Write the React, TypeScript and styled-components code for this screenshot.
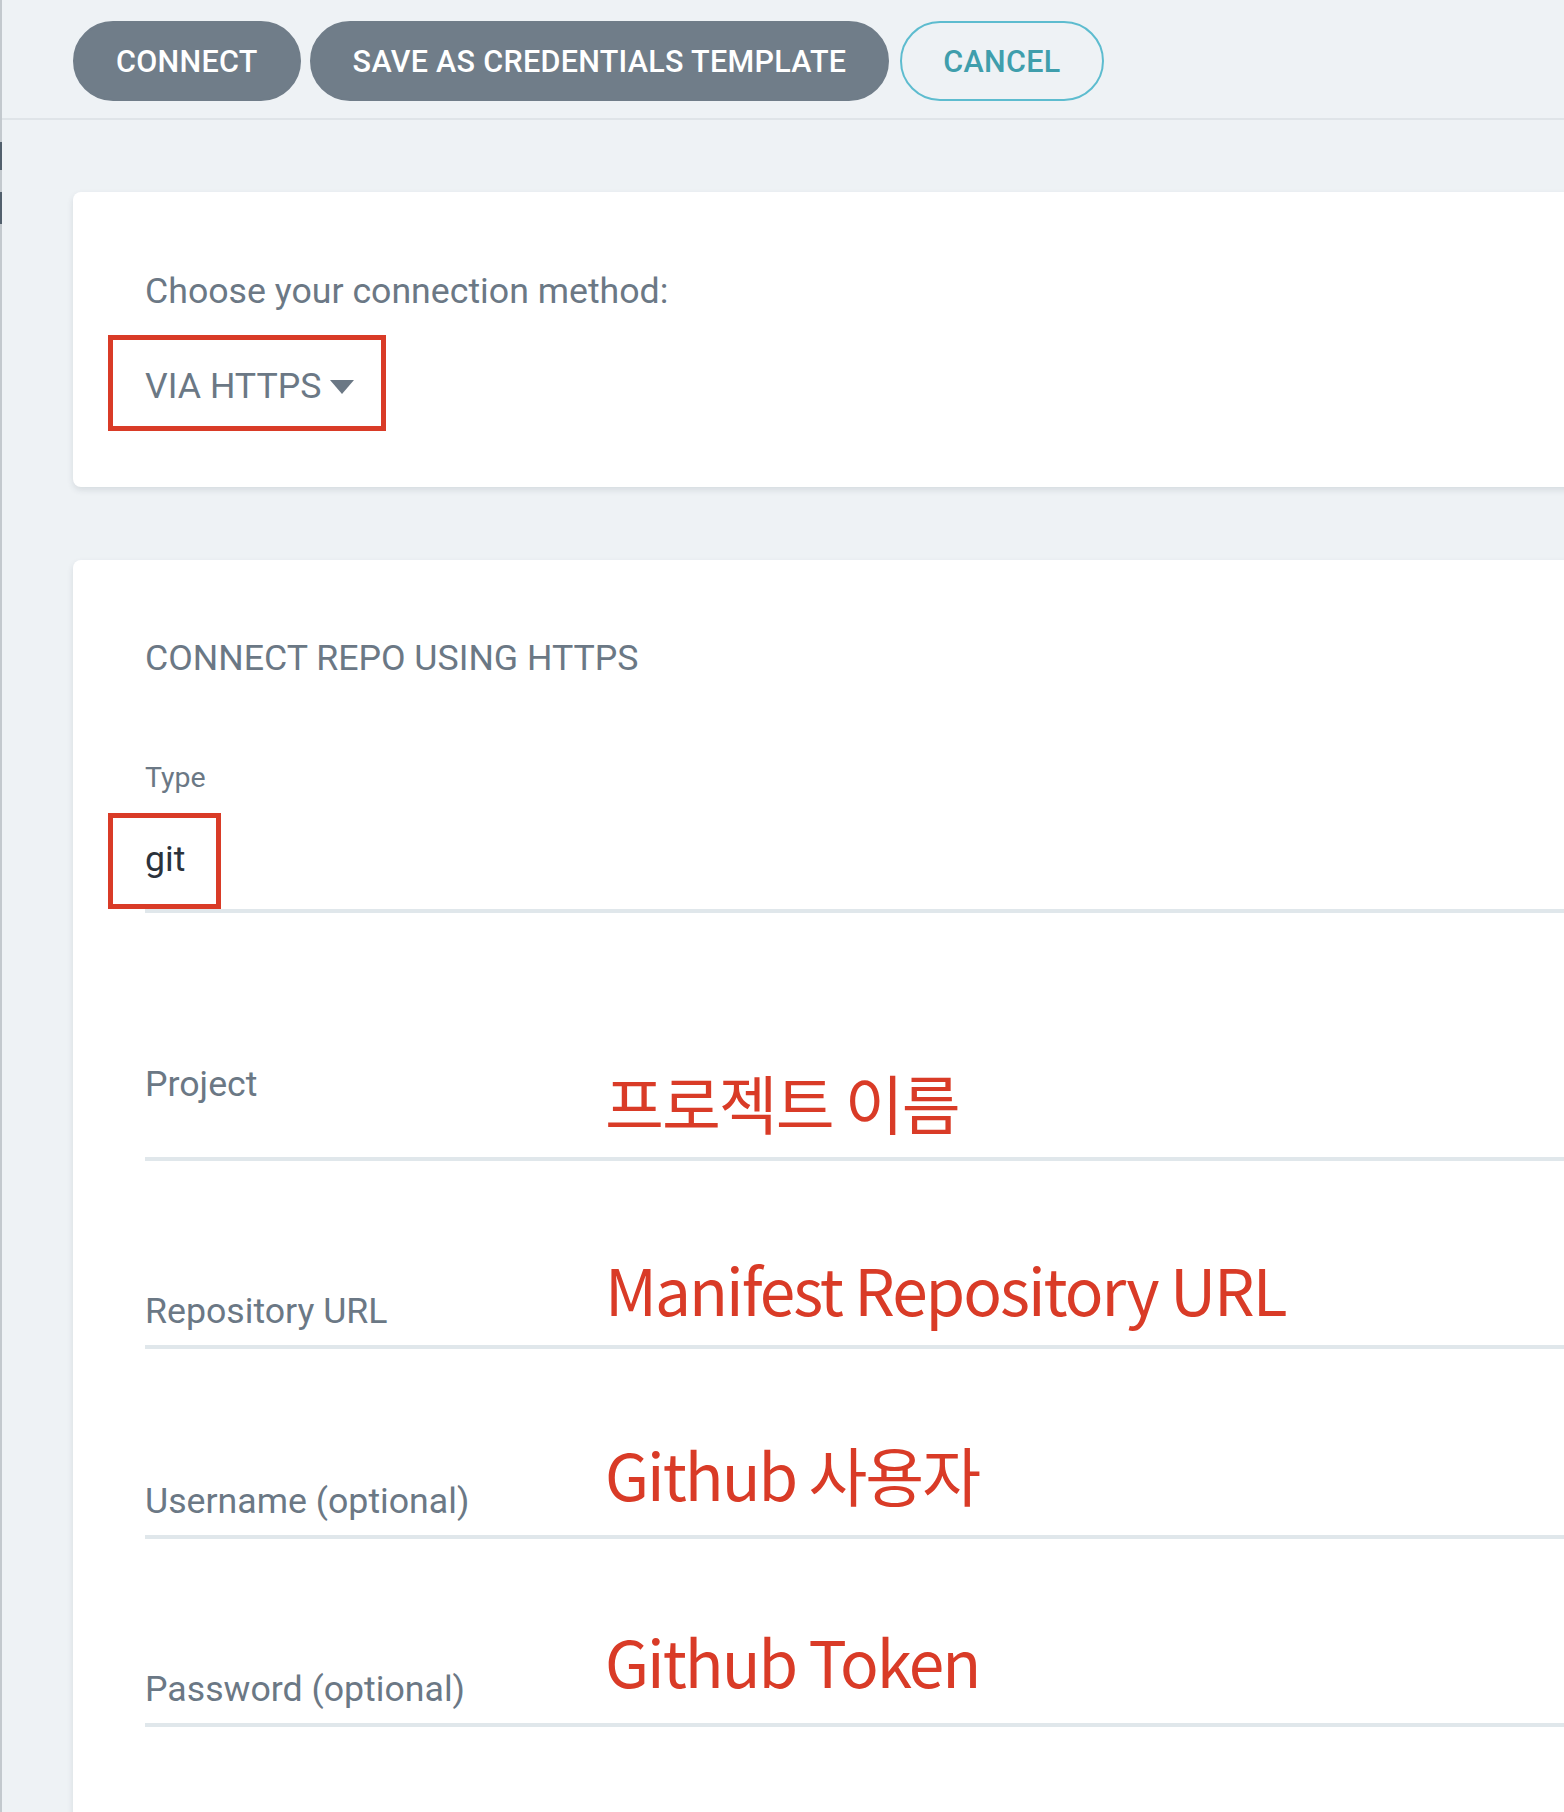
import styled, { createGlobalStyle } from "styled-components";

const GlobalStyle = createGlobalStyle`
  html, body {
    margin: 0;
    padding: 0;
    background: #eef2f5;
    overflow: hidden;
  }
  body {
    font-family: Roboto, "Liberation Sans", sans-serif;
  }
`;

const Page = styled.div`
  display: flex;
  min-height: 1812px;
`;

const LeftRail = styled.div`
  width: 2px;
  flex-shrink: 0;
  background: #c3c9ce;
  display: flex;
  flex-direction: column;
  padding-top: 142px;
  gap: 22px;
`;

const RailMark = styled.div<{ $h: number }>`
  height: ${(p) => p.$h}px;
  background: #52606d;
`;

const Main = styled.div`
  flex: 1;
  display: flex;
  flex-direction: column;
  min-width: 0;
`;

const Toolbar = styled.div`
  display: flex;
  align-items: center;
  gap: 9px;
  padding: 21px 0 17px 71px;
  border-bottom: 2px solid #dfe4e8;
`;

const Button = styled.button<{ $outline?: boolean }>`
  height: 80px;
  padding: 0 41px;
  border-radius: 40px;
  font-family: Roboto, "Liberation Sans", sans-serif;
  font-size: 30.5px;
  font-weight: 500;
  letter-spacing: 0.3px;
  text-transform: uppercase;
  cursor: pointer;
  background: ${(p) => (p.$outline ? "transparent" : "#707d89")};
  color: ${(p) => (p.$outline ? "#3f9eac" : "#ffffff")};
  border: 2px solid ${(p) => (p.$outline ? "#5dbccf" : "#707d89")};
  margin-left: ${(p) => (p.$outline ? "2px" : "0")};
`;

const Content = styled.div`
  display: flex;
  flex-direction: column;
  gap: 73px;
  padding: 72px 0 0 71px;
  margin-right: -30px;
`;

const Card = styled.div<{ $fill?: boolean }>`
  background: #ffffff;
  border-radius: 8px;
  box-shadow: 0 3px 6px rgba(40, 55, 70, 0.12);
  padding: ${(p) => (p.$fill ? "78px 0 200px 72px" : "79px 0 56px 72px")};
  display: flex;
  flex-direction: column;
  align-items: flex-start;
`;

const Heading = styled.div`
  font-size: 35.7px;
  line-height: 40px;
  color: #6b7885;
`;

const Highlight = styled.div`
  margin-left: -37px;
  margin-top: 24px;
  border: 5px solid #d93b27;
  padding: 26px 27px 20px 32px;
  display: flex;
  align-items: center;
  gap: 9px;
  font-size: 35.7px;
  line-height: 40px;
  color: #6b7885;
`;

const Caret = styled.span`
  width: 0;
  height: 0;
  border-left: 12px solid transparent;
  border-right: 12px solid transparent;
  border-top: 14px solid #6b7885;
  margin-top: 2px;
`;

const SmallLabel = styled.div`
  margin-top: 84px;
  font-size: 28.5px;
  line-height: 32px;
  color: #6b7885;
`;

const TypeField = styled.div`
  align-self: stretch;
  margin-top: 19px;
  border-bottom: 4px solid #e0e7eb;
  display: flex;
`;

const TypeBox = styled.div`
  margin-left: -37px;
  border: 5px solid #d93b27;
  padding: 21px 31px 25px 32px;
  font-size: 35.7px;
  line-height: 40px;
  color: #2b323b;
`;

const FieldRow = styled.div<{ $h: number }>`
  align-self: stretch;
  height: ${(p) => p.$h}px;
  box-sizing: border-box;
  border-bottom: 4px solid #e0e7eb;
  display: flex;
  align-items: flex-end;
`;

const FieldLabel = styled.div<{ $lift?: number }>`
  width: 460px;
  flex-shrink: 0;
  font-size: 35.7px;
  line-height: 40px;
  color: #6b7885;
  padding-bottom: ${(p) => p.$lift ?? 14}px;
`;

const Note = styled.div<{ $pb: number }>`
  font-family: "Noto Sans CJK KR", "Noto Sans", sans-serif;
  font-size: 64px;
  line-height: 80px;
  letter-spacing: -2px;
  color: #d93b27;
  padding-bottom: ${(p) => p.$pb}px;
  white-space: nowrap;
`;

const fields = [
  { label: "Project", note: "프로젝트 이름", h: 248, lift: 53, pb: 16 },
  { label: "Repository URL", note: "Manifest Repository URL", h: 188, lift: 14, pb: 17 },
  { label: "Username (optional)", note: "Github 사용자", h: 190, lift: 14, pb: 22 },
  { label: "Password (optional)", note: "Github Token", h: 188, lift: 14, pb: 23 },
];

const App = () => {
  return (
    <>
      <GlobalStyle />
      <Page>
        <LeftRail>
          <RailMark $h={28} />
          <RailMark $h={32} />
        </LeftRail>
        <Main>
          <Toolbar>
            <Button>Connect</Button>
            <Button>Save as credentials template</Button>
            <Button $outline>Cancel</Button>
          </Toolbar>
          <Content>
            <Card>
              <Heading>Choose your connection method:</Heading>
              <Highlight>
                VIA HTTPS
                <Caret />
              </Highlight>
            </Card>
            <Card $fill>
              <Heading>CONNECT REPO USING HTTPS</Heading>
              <SmallLabel>Type</SmallLabel>
              <TypeField>
                <TypeBox>git</TypeBox>
              </TypeField>
              {fields.map((f) => (
                <FieldRow key={f.label} $h={f.h}>
                  <FieldLabel $lift={f.lift}>{f.label}</FieldLabel>
                  <Note $pb={f.pb}>{f.note}</Note>
                </FieldRow>
              ))}
            </Card>
          </Content>
        </Main>
      </Page>
    </>
  );
};

export default App;
